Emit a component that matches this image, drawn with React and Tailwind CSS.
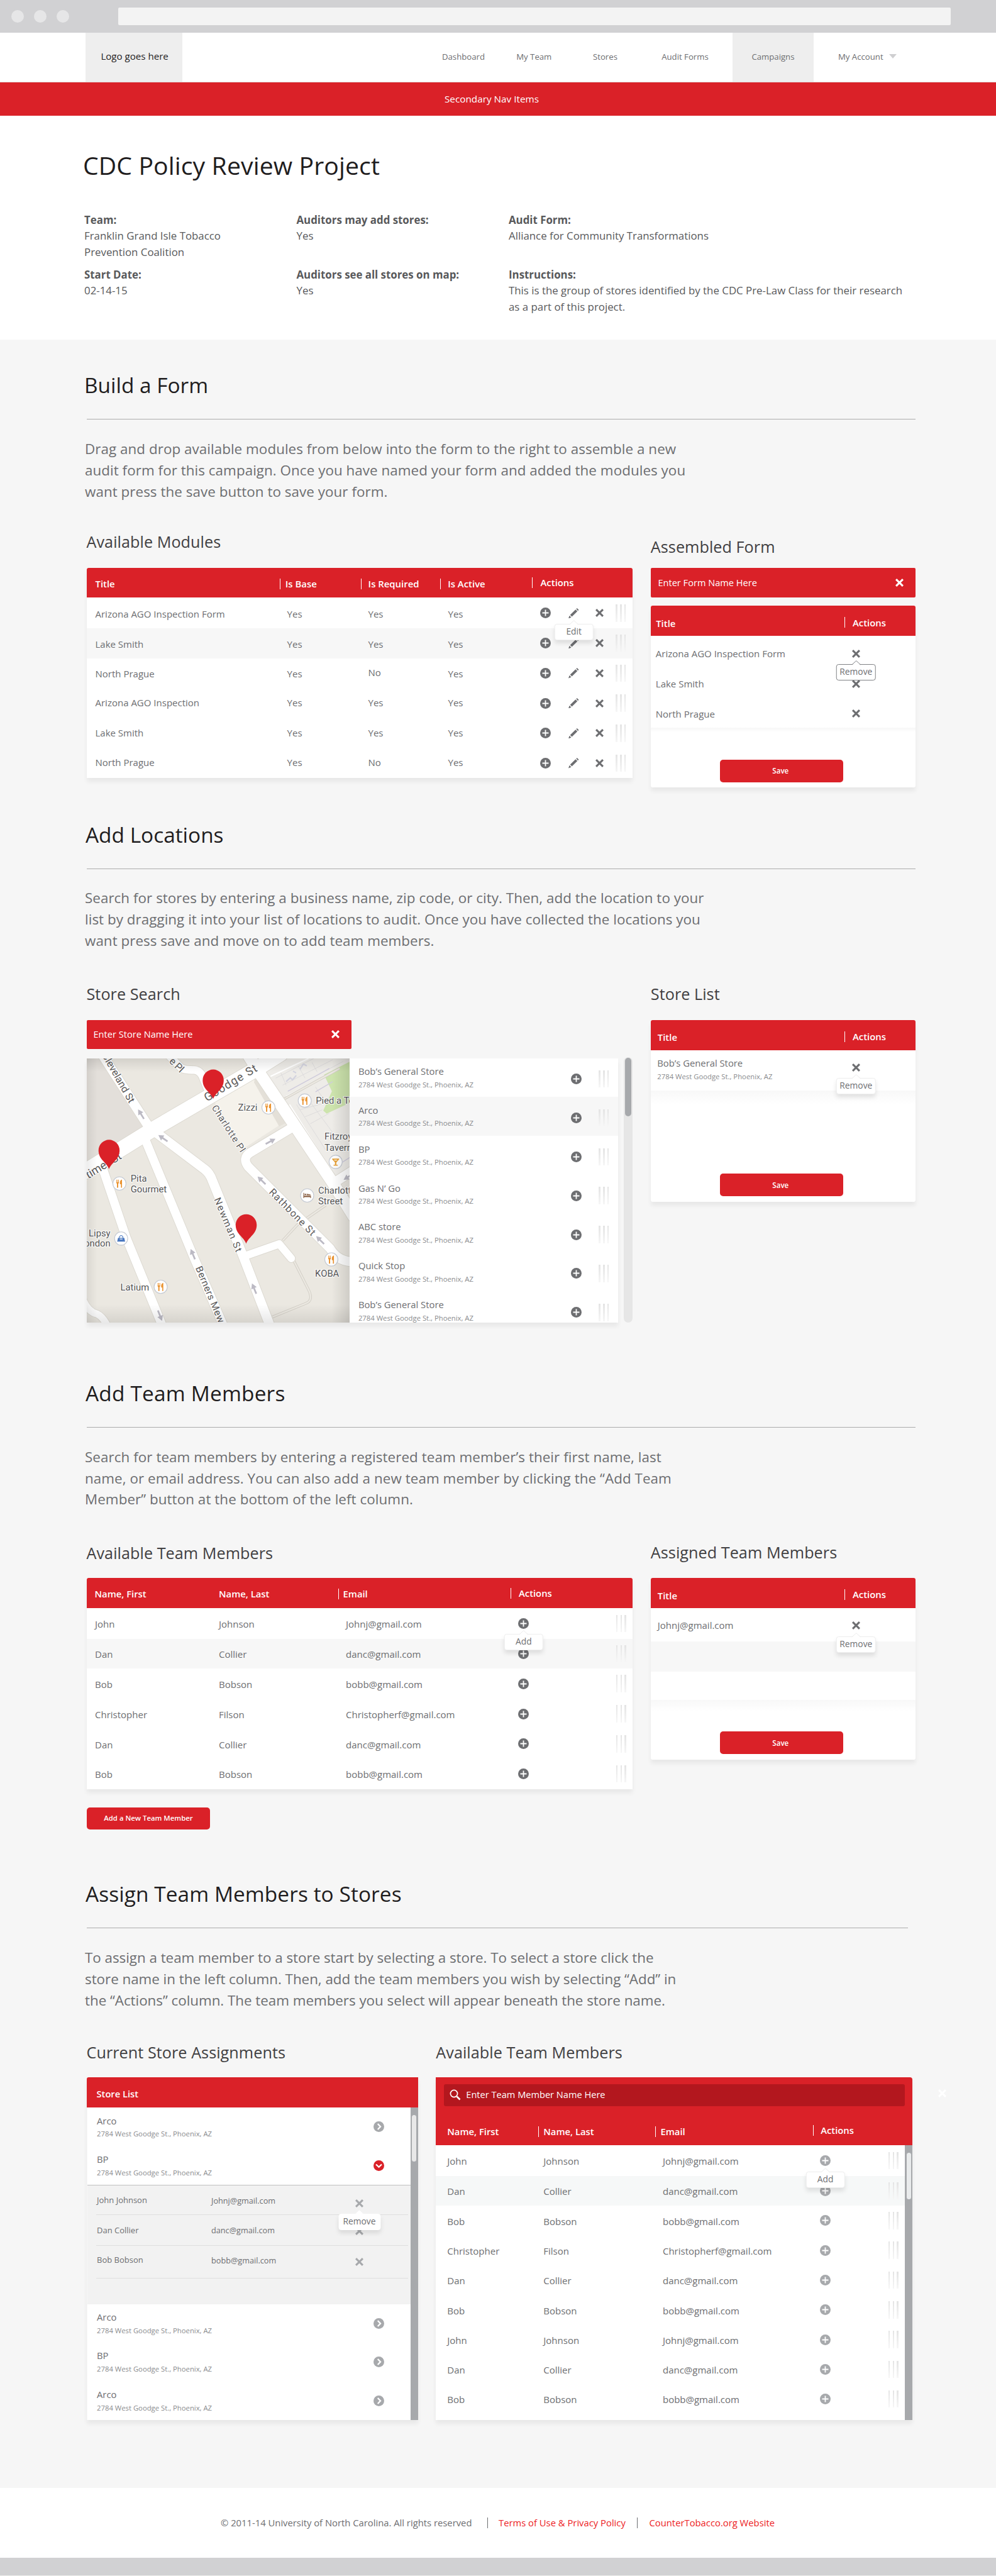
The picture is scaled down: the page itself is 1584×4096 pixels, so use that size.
import React from "react";

/* ---------- icons ---------- */

function PlusIcon({ className = "text-[#6d6e71]" }) {
  return (
    <svg viewBox="0 0 34 34" className={`block h-[17px] w-[17px] shrink-0 ${className}`}>
      <circle cx="17" cy="17" r="17" fill="currentColor" />
      <path d="M17 7v20M7 17h20" stroke="#fff" strokeWidth="3.6" />
    </svg>
  );
}

function CloseIcon({ className = "text-[#6d6e71]" }) {
  return (
    <svg viewBox="0 0 60 60" className={`block h-[13px] w-[13px] shrink-0 ${className}`}>
      <path d="M5 5L55 55M55 5L5 55" stroke="currentColor" strokeWidth="14" />
    </svg>
  );
}

function PencilIcon() {
  return (
    <svg viewBox="0 0 80 80" className="block h-[16.5px] w-[16.5px] shrink-0 text-[#6d6e71]">
      <path d="M60 6L66 0L80 13L73 20ZM55 11L69 24L27 65L13 52ZM8 57L22 71L0 80Z" fill="currentColor" />
    </svg>
  );
}

function ChevronIcon({ open }) {
  return (
    <svg viewBox="0 0 34 34" className={`block h-[17px] w-[17px] shrink-0 ${open ? "text-[#da2128]" : "text-[#a7a9ac]"}`}>
      <circle cx="17" cy="17" r="17" fill="currentColor" />
      <path d={open ? "M8 13L17 21.500L26 13" : "M13.500 8L22 17L13.500 26"} fill="none" stroke="#fff" strokeWidth="4.600" />
    </svg>
  );
}

function SearchIcon() {
  return (
    <svg viewBox="0 0 18 18" className="block h-[18px] w-[18px] shrink-0" fill="none" stroke="#fff">
      <circle cx="7" cy="7" r="5.600" strokeWidth="1.700" />
      <path d="M11.500 11.500L16.500 16.500" strokeWidth="2.600" />
    </svg>
  );
}

function Grip() {
  return (
    <div className="flex h-[27.5px] shrink-0 gap-[4.300px]">
      <div className="w-[2.500px] bg-linear-to-b from-[#e4e4e4] to-[#f6f6f6]" />
      <div className="w-[2.500px] bg-linear-to-b from-[#e4e4e4] to-[#f6f6f6]" />
      <div className="w-[2.500px] bg-linear-to-b from-[#e4e4e4] to-[#f6f6f6]" />
    </div>
  );
}

/* ---------- shared pieces ---------- */

function Tip({ label, outlined, wide, plain, children }) {
  const edge = outlined ? "border-[#808285]" : plain ? "border-white" : "border-[#eeeeee]";
  return (
    <div className="relative shrink-0">
      {children}
      <div
        className={`absolute top-1/2 left-1/2 z-10 mt-[17px] flex h-[26px] -translate-x-1/2 items-center justify-center rounded-[4px] border bg-white pb-[2px] text-[13.800px] leading-none text-[#6d6e71] ${edge} ${wide ? "w-[67px]" : "w-[62.500px]"} ${outlined ? "" : "shadow-[0_5px_7px_rgba(0,0,0,0.10)]"}`}
      >
        <svg viewBox="0 0 14 8" className="absolute -top-[7px] left-1/2 h-[8px] w-[14px] -translate-x-1/2">
          <path d="M0 8L7 1L14 8Z" fill="#fff" />
          <path d="M0 7L7 .7L14 7" fill="none" stroke={outlined ? "#808285" : plain ? "#fff" : "#ececec"} />
        </svg>
        {label}
      </div>
    </div>
  );
}

function HeadCell({ children, bar = true, className = "" }) {
  return (
    <div className={`flex h-full items-center ${className}`}>
      {bar && <div className="mr-[0.500px] h-[17px] w-px shrink-0 bg-white" />}
      <div className="whitespace-nowrap">{children}</div>
    </div>
  );
}

function SaveButton({ className = "" }) {
  return (
    <div className={`ml-[110px] flex h-[36px] w-[196px] items-center justify-center rounded-[5px] bg-[#da2128] pr-[3px] text-[11.600px] font-semibold text-white ${className}`}>
      Save
    </div>
  );
}

function Section({ title, lines, height, rule = "w-[1318.500px]", shift = "-ml-[1.500px]", track, children }) {
  return (
    <section className={`flex flex-col pl-[137.500px] ${height}`}>
      <h2 className={`h-[48px] text-[33.400px] leading-[48px] whitespace-nowrap text-[#1f1d1e] ${shift}`}>{title}</h2>
      <div className={`mt-[30px] h-px shrink-0 bg-[#acacac] ${rule}`} />
      <p className={`mt-[29.800px] -ml-[2.500px] text-[22.400px] leading-[33.800px] text-[#6d6e71] ${track}`}>
        {lines.map((l) => (
          <span key={l} className="block whitespace-nowrap">{l}</span>
        ))}
      </p>
      {children}
    </section>
  );
}

const h3 = "h-[32px] text-[25.200px] leading-[32px] tracking-[0.050px] whitespace-nowrap text-[#414042]";
const cardShadow = "shadow-[0_6px_7px_rgba(0,0,0,0.06)]";

function SideHeader({ pad }) {
  return (
    <div className={`flex h-[48px] rounded-t-[3px] bg-[#da2128] text-[14.900px] font-semibold text-white ${pad}`}>
      <HeadCell bar={false} className="w-[308.400px] pt-[8px] pl-[0.200px]">Title</HeadCell>
      <HeadCell className="gap-[11.300px] pt-[5px]">Actions</HeadCell>
    </div>
  );
}

function StoreText({ name }) {
  return (
    <div className="pt-[10.400px]">
      <div className="text-[14.800px] leading-[20px] whitespace-nowrap text-[#6d6e71]">{name}</div>
      <div className="mt-[3.600px] text-[11.300px] leading-[16px] whitespace-nowrap text-[#8a8b8e]">2784 West Goodge St., Phoenix, AZ</div>
    </div>
  );
}

/* ---------- page header ---------- */

function Header() {
  return (
    <>
      <div className="flex h-[52px] items-center bg-[#d1d1d3] pl-[18px]">
        <div className="flex gap-[16px]">
          <div className="h-[20px] w-[20px] rounded-full bg-[#e6e6e7]" />
          <div className="h-[20px] w-[20px] rounded-full bg-[#e6e6e7]" />
          <div className="h-[20px] w-[20px] rounded-full bg-[#e6e6e7]" />
        </div>
        <div className="ml-[78px] h-[28px] w-[1324px] rounded-[2px] bg-[#f3f3f3]" />
      </div>
      <div className="flex h-[78.600px] border-b border-[#e4d9d9] bg-white text-[13.200px] text-[#6d6e71]">
        <div className="ml-[136.400px] flex w-[153.600px] items-center bg-[#eeeeee] pb-[2px] pl-[24px] text-[15.100px] text-[#1f1d1e]">Logo goes here</div>
        <div className="ml-[391px] flex w-[112px] items-center justify-center">Dashboard</div>
        <div className="flex w-[112.600px] items-center justify-center">My Team</div>
        <div className="flex w-[113.800px] items-center justify-center">Stores</div>
        <div className="flex w-[140.200px] items-center justify-center">Audit Forms</div>
        <div className="ml-[5.400px] flex w-[129px] items-center justify-center bg-[#eeeeee]">Campaigns</div>
        <div className="ml-[39px] flex items-center gap-[9px]">
          My Account
          <svg viewBox="0 0 12 7" className="mb-[3px] h-[7px] w-[12px]"><path d="M0 0H12L6 7Z" fill="#cfcfd1" /></svg>
        </div>
      </div>
      <div className="flex h-[53.600px] items-center justify-center bg-[#da2128] pt-px pr-[20px] text-[15.300px] text-white">Secondary Nav Items</div>
      <div className="h-[356px] bg-white pt-[52.400px] pl-[134px]">
        <h1 className="h-[52px] text-[39.200px] leading-[52px] tracking-[0.100px] text-[#1f1d1e]">
          <span className="-ml-[2px]">CDC Policy Review Project</span>
        </h1>
        <div className="mt-[48.400px] grid grid-cols-[337.500px_337.500px_700px] gap-y-[10.500px] text-[16.850px] leading-[25.400px] whitespace-nowrap text-[#58595b]">
          <div><b>Team:</b><br />Franklin Grand Isle Tobacco<br />Prevention Coalition</div>
          <div><b>Auditors may add stores:</b><br />Yes</div>
          <div><b>Audit Form:</b><br />Alliance for Community Transformations</div>
          <div><b>Start Date:</b><br />02-14-15</div>
          <div><b>Auditors see all stores on map:</b><br />Yes</div>
          <div><b>Instructions:</b><br />This is the group of stores identified by the CDC Pre-Law Class for their research<br />as a part of this project.</div>
        </div>
      </div>
    </>
  );
}

/* ---------- build a form ---------- */

const MODULES = [
  ["Arizona AGO Inspection Form", "Yes", "h-[48.700px]", "pt-[2px]"],
  ["Lake Smith", "Yes", "h-[47.500px] bg-[#f7f7f7]", "pt-[2px]"],
  ["North Prague", "No", "h-[47.700px]", "pt-[2px]"],
  ["Arizona AGO Inspection", "Yes", "h-[47.700px]", "pb-[2px]"],
  ["Lake Smith", "Yes", "h-[47.700px]", "pb-[2px]"],
  ["North Prague", "No", "h-[47.700px]", "pb-[2px]"],
];

function BuildForm() {
  const cols = "grid grid-cols-[307.500px_128.500px_126.500px_146px_1fr]";
  return (
    <Section
      title="Build a Form"
      height="h-[714.400px]"
      shift="-ml-[3.500px]"
      track="tracking-[0.050px]"
      lines={[
        "Drag and drop available modules from below into the form to the right to assemble a new",
        "audit form for this campaign. Once you have named your form and added the modules you",
        "want press the save button to save your form.",
      ]}
    >
      <div className="flex gap-[28.500px]">
        <div className="w-[868.800px] pt-[47.100px]">
          <h3 className={h3}>Available Modules</h3>
          <div className={`mt-[25.200px] bg-white ${cardShadow}`}>
            <div className={`h-[47.800px] rounded-t-[3px] bg-[#da2128] text-[14.900px] font-semibold text-white ${cols}`}>
              <HeadCell bar={false} className="pt-[3px] pl-[14px]">Title</HeadCell>
              <HeadCell className="gap-[7.300px] pt-[3px]">Is Base</HeadCell>
              <HeadCell className="gap-[10.600px] pt-[3px]">Is Required</HeadCell>
              <HeadCell className="gap-[10.700px] pt-[3px]">Is Active</HeadCell>
              <HeadCell className="gap-[12px]">Actions</HeadCell>
            </div>
            {MODULES.map(([name, req, h, pad], i) => (
              <div key={i} className={`items-center text-[15px] text-[#6d6e71] ${cols} ${h}`}>
                <div className={`pl-[14px] ${pad}`}>{name}</div>
                <div className={`pl-[11.600px] ${pad}`}>Yes</div>
                <div className={req === "No" ? "pl-[12px] pb-[2px]" : `pl-[12px] ${pad}`}>{req}</div>
                <div className={`pl-[12.500px] ${pad}`}>Yes</div>
                <div className="flex items-center pl-[13px]">
                  <PlusIcon />
                  <div className="ml-[28.400px]">{i === 0 ? <Tip label="Edit"><PencilIcon /></Tip> : <PencilIcon />}</div>
                  <CloseIcon className="ml-[26.400px] text-[#6d6e71]" />
                  <div className="ml-[19px]"><Grip /></div>
                </div>
              </div>
            ))}
          </div>
        </div>
        <div className="w-[421.300px] pt-[54.700px]">
          <h3 className={h3}>Assembled Form</h3>
          <div className="mt-[18.100px] flex h-[47px] items-center justify-between rounded-[2px] bg-[#da2128] pr-[19px] pl-[11.600px] text-[14.600px] text-white">
            Enter Form Name Here
            <CloseIcon className="text-white" />
          </div>
          <div className={`mt-[13.300px] h-[288.600px] rounded-[3px] bg-white ${cardShadow}`}>
            <SideHeader pad="pl-[8.200px] [&>*:first-child]:w-[300.200px]" />
            <div className="pt-[4px] pl-[8px] text-[15px] text-[#6d6e71]">
              {["Arizona AGO Inspection Form", "Lake Smith", "North Prague"].map((n, i) => (
                <div key={n} className="flex h-[47.800px] items-center">
                  <div className="w-[312px]">{n}</div>
                  {i === 0 ? <Tip label="Remove" outlined><CloseIcon /></Tip> : <CloseIcon />}
                </div>
              ))}
            </div>
            <div className="-mt-[2px] h-[7px] bg-linear-to-b from-[#f7f7f7] to-white" />
            <SaveButton className="mt-[43.700px]" />
          </div>
        </div>
      </div>
    </Section>
  );
}

/* ---------- map ---------- */

const ROADS = [
  ["M-20 697L393 445L1000 97L1140 10", 86],
  ["M95 0L370 420", 54],
  ["M480 10L560 90Q575 104 640 104Q675 108 690 150L715 210", 44],
  ["M945 10L1025 135L1210 405L1440 745L1560 935", 68],
  ["M1440 750L1570 668", 54],
  ["M1210 428L965 572Q912 605 952 655L1425 1120Q1470 1195 1560 1195", 52],
  ["M420 462L700 670Q728 692 742 730L920 1160L1085 1580", 54],
  ["M350 490L640 1180L812 1570", 50],
  ["M100 640L245 1060L460 1575", 50],
  ["M925 1165L1130 1094L1200 1176", 44],
  ["M-10 1400Q20 1480 75 1492Q115 1510 145 1580", 40],
];

const FOOD = [[1068, 317], [1278, 278], [205, 750], [444, 1338], [1432, 1182]];
const ARROWS = [[330, 355, -122], [457, 492, -146], [1080, 510, -28], [1028, 732, -136], [1367, 1072, -136], [630, 1152, -113], [985, 1348, -113], [440, 1502, 68], [1530, 712, 148]];
const LABELS = [
  ["Zizzi", 892, 335], ["Pied a Terre", 1342, 295], ["Fitzroy", 1392, 501], ["Tavern", 1392, 565], ["Charlotte", 1356, 806], ["Street", 1356, 870],
  ["KOBA", 1338, 1282], ["Pita", 270, 738], ["Gourmet", 270, 800], ["Latium", 211, 1360],
];
const STREETS = [
  ["Goodge St", 712, 285, -31, 66, 345], ["Charlotte Pl", 738, 318, 57, 54, 308], ["Rathbone St", 1068, 802, 45, 58, 352],
  ["Newman St", 752, 840, 67, 56, 330], ["Berners Mews", 645, 1230, 67, 56, 375], ["e Pl", 490, 58, 44, 58, 92],
];

function Map() {
  return (
    <svg viewBox="16 38 1525 1505" preserveAspectRatio="none" className="block h-full w-[418.900px] shrink-0" fontFamily="Roboto, sans-serif">
      <defs>
        <linearGradient id="edgeX"><stop offset="0" stopColor="#000" stopOpacity=".07" /><stop offset=".04" stopColor="#000" stopOpacity="0" /><stop offset=".93" stopColor="#000" stopOpacity="0" /><stop offset="1" stopColor="#000" stopOpacity=".12" /></linearGradient>
        <linearGradient id="edgeY" x2="0" y2="1"><stop offset="0" stopColor="#000" stopOpacity=".1" /><stop offset=".05" stopColor="#000" stopOpacity="0" /><stop offset=".93" stopColor="#000" stopOpacity="0" /><stop offset="1" stopColor="#000" stopOpacity=".09" /></linearGradient>
      </defs>
      <rect x="16" y="38" width="1525" height="1505" fill="#ebe8e1" />
      <path d="M16 38H95L370 440L16 650Z" fill="#e3dfda" />
      <path d="M745 270L990 135L1160 400L925 550Z" fill="#f5f2eb" />
      <path d="M990 135L1180 400L1130 425L985 175Z" fill="#e4e0d8" />
      <path d="M1030 38H1541V650L1440 735L1245 420L1030 105Z" fill="#eeece8" />
      <g fill="none" stroke="#dad8da" strokeWidth="3">
        <path d="M1110 150L1330 38M1150 190L1440 45M1180 225L1500 55M1160 270L1541 60M1250 330L1400 290M1280 370L1380 330M1310 410L1420 350M1230 300L1400 560M1290 260L1470 500M1340 200L1420 320M1140 120L1170 190M1240 80L1280 150M1320 60L1350 115M1400 150L1440 220" />
      </g>
      <g fill="none" stroke="#fff" strokeWidth="7"><path d="M1080 140L1300 38M1170 255L1541 65M1190 300L1440 690" /></g>
      <path d="M1170 170l25 -22l12 12l22 -25M1250 100l20 -30l20 10M1210 110l18 10" stroke="#d3d3df" strokeWidth="8" fill="none" />
      <path d="M1390 130L1541 55V290L1405 352L1385 335L1435 225Z" fill="#cde4ad" />
      <path d="M1180 225L1420 95M1340 228L1440 170M1470 645L1541 600" stroke="#cfcbdc" strokeWidth="5" fill="none" />
      <path d="M1150 1075L1235 985L1400 873M1215 1190L1300 1355Q1330 1415 1285 1432L1085 1512M1160 268L1480 95" fill="none" stroke="#cfcbc3" strokeWidth="15" />
      <path d="M1150 1075L1235 985L1400 873M1215 1190L1300 1355Q1330 1415 1285 1432L1085 1512M1160 268L1480 95" fill="none" stroke="#ebe8e1" strokeWidth="9" />
      <g fill="none" stroke="#dcd9d1" strokeLinecap="round" strokeLinejoin="round">
        {ROADS.map(([d, w]) => <path key={d} d={d} strokeWidth={w + 7} />)}
      </g>
      <g fill="none" stroke="#fff" strokeLinecap="round" strokeLinejoin="round">
        {ROADS.map(([d, w]) => <path key={d} d={d} strokeWidth={w} />)}
      </g>
      {ARROWS.map(([x, y, a]) => (
        <path key={`${x}-${y}`} transform={`translate(${x} ${y}) rotate(${a})`} d="M-32 -5H2V-17L32 0L2 17V5H-32Z" fill="#bcbac4" />
      ))}
      <g fill="#5c5a5a" stroke="#fff" strokeWidth="8" strokeLinejoin="round" paintOrder="stroke">
        {STREETS.map(([t, x, y, a, s, l]) => (
          <text key={t} transform={`translate(${x} ${y}) rotate(${a})`} fontSize={s} textLength={l} fontWeight="400">{t}</text>
        ))}
        <text transform="translate(262 296) rotate(60)" fontSize="58" textAnchor="end">Cleveland St</text>
        <text transform="translate(222 606) rotate(-31)" fontSize="66" textAnchor="end">Mortimer St</text>
        <g fill="#545454" fontSize="54">
          {LABELS.map(([t, x, y]) => <text key={t} x={x} y={y}>{t}</text>)}
          <text x="153" y="1050" textAnchor="end">Lipsy</text>
          <text x="153" y="1108" textAnchor="end">London</text>
        </g>
      </g>
      <g fill="#fff" stroke="#c3c8d2" strokeWidth="4">
        {[...FOOD, [215, 1063], [1457, 627], [1292, 818]].map(([x, y]) => <circle key={`${x}-${y}`} cx={x} cy={y} r="38" />)}
      </g>
      {FOOD.map(([x, y]) => (
        <g key={`${x}-${y}`} transform={`translate(${x} ${y})`} fill="#ea9330">
          <path d="M-18 -22H-15V-8H-12V-22H-9V-8H-6V-22H-3V-4L-7 2V24H-14V2L-18 -4Z" />
          <path d="M15 -23V24H9V4H3V-10Q5 -20 15 -23Z" />
        </g>
      ))}
      <g transform="translate(215 1063)"><path d="M-18 -4H18L23 18H-23Z" fill="#4a78c0" /><path d="M-10 -4V-10Q0 -24 10 -10V-4" fill="none" stroke="#4a78c0" strokeWidth="4" /><path d="M-8 3H8" stroke="#fff" strokeWidth="4" /></g>
      <path transform="translate(1457 627)" d="M-20 -19H20V-14L4 3V16H12V21H-12V16H-4V3L-20 -14ZM-10 -13L-6 -8H6L10 -13Z" fill="#e8a23a" fillRule="evenodd" />
      <path transform="translate(1292 818)" d="M-22 -15H-18V1H22V15H18V9H-18V15H-22ZM-15 -9H-5V-2H-15ZM-2 -9L18 -6Q22 -4 22 -1H-2Z" fill="#8b6246" />
      <rect x="16" y="38" width="1525" height="1505" fill="url(#edgeX)" />
      <rect x="16" y="38" width="1525" height="1505" fill="url(#edgeY)" />
      {[[748, 162], [145, 562], [939, 986]].map(([x, y]) => (
        <path key={x} transform={`translate(${x} ${y})`} d="M0 106C-14 68 -61 52 -61 0A61 61 0 0 1 61 0C61 52 14 68 0 106Z" fill="#da2128" />
      ))}
    </svg>
  );
}

/* ---------- add locations ---------- */

function AddLocations() {
  const stores = ["Bob’s General Store", "Arco", "BP", "Gas N’ Go", "ABC store", "Quick Stop", "Bob’s General Store"];
  return (
    <Section
      title="Add Locations"
      height="h-[888.500px]"
      track="tracking-[0.040px]"
      lines={[
        "Search for stores by entering a business name, zip code, or city. Then, add the location to your",
        "list by dragging it into your list of locations to audit. Once you have collected the locations you",
        "want press save and move on to add team members.",
      ]}
    >
      <div className="flex gap-[28.500px]">
        <div className="w-[868.800px] pt-[51.700px]">
          <h3 className={h3}>Store Search</h3>
          <div className="mt-[25.300px] ml-[0.500px] flex h-[46.400px] w-[420.500px] items-center justify-between rounded-[2px] bg-[#da2128] pr-[18.500px] pl-[10.500px] text-[14.600px] text-white">
            Enter Store Name Here
            <CloseIcon className="text-white" />
          </div>
          <div className="mt-[14.400px] flex h-[420.400px] justify-between">
            <div className={`flex w-[845.300px] overflow-hidden bg-white ${cardShadow}`}>
              <Map />
              <div className="flex-1">
                {stores.map((s, i) => (
                  <div key={i} className={i === 1 ? "flex h-[61.900px] bg-[#f7f7f7] pl-[13.500px]" : "flex h-[61.900px] pl-[13.500px]"}>
                    <div className="w-[338.500px]"><StoreText name={s} /></div>
                    <div className="flex items-center pt-[4px]">
                      <PlusIcon />
                      <div className="ml-[27px]"><Grip /></div>
                    </div>
                  </div>
                ))}
              </div>
            </div>
            <div className="-mt-[2px] w-[14.300px] rounded-full bg-[#e6e6e6] px-[2px] pt-[1.500px]">
              <div className="h-[93px] rounded-full bg-[#a7a9ac]" />
            </div>
          </div>
        </div>
        <div className="w-[421.300px] pt-[51.700px]">
          <h3 className={h3}>Store List</h3>
          <div className={`mt-[25.200px] h-[289px] rounded-[3px] bg-white ${cardShadow}`}>
            <SideHeader pad="pl-[10.800px] [&>*:first-child]:w-[297.600px]" />
            <div className="flex h-[64.400px] pl-[10.500px]">
              <div className="w-[309.500px]"><StoreText name="Bob’s General Store" /></div>
              <div className="pt-[21px]"><Tip label="Remove"><CloseIcon /></Tip></div>
            </div>
            <div className="h-[22px] bg-linear-to-b from-[#f8f8f8] to-white" />
            <SaveButton className="mt-[110.300px]" />
          </div>
        </div>
      </div>
    </Section>
  );
}

/* ---------- add team members ---------- */

const PEOPLE = [
  ["John", "Johnson", "Johnj@gmail.com"],
  ["Dan", "Collier", "danc@gmail.com"],
  ["Bob", "Bobson", "bobb@gmail.com"],
  ["Christopher", "Filson", "Christopherf@gmail.com"],
  ["Dan", "Collier", "danc@gmail.com"],
  ["Bob", "Bobson", "bobb@gmail.com"],
  ["John", "Johnson", "Johnj@gmail.com"],
  ["Dan", "Collier", "danc@gmail.com"],
  ["Bob", "Bobson", "bobb@gmail.com"],
];

function AddTeamMembers() {
  const cols = "grid grid-cols-[210.500px_190px_273.500px_1fr]";
  return (
    <Section
      title="Add Team Members"
      height="h-[796.200px]"
      shift="-ml-[1.500px] tracking-[0.200px]"
      track="tracking-[0.065px]"
      lines={[
        "Search for team members by entering a registered team member’s their first name, last",
        "name, or email address. You can also add a new team member by clicking the “Add Team",
        "Member” button at the bottom of the left column.",
      ]}
    >
      <div className="flex gap-[28.500px]">
        <div className="w-[868.800px] pt-[51.800px]">
          <h3 className={h3}>Available Team Members</h3>
          <div className={`mt-[23.900px] bg-white ${cardShadow}`}>
            <div className={`h-[48.100px] rounded-t-[3px] bg-[#da2128] text-[14.800px] font-semibold text-white ${cols}`}>
              <HeadCell bar={false} className="pt-[3px] pl-[13px]">Name, First</HeadCell>
              <HeadCell bar={false} className="pt-[3px]">Name, Last</HeadCell>
              <HeadCell className="gap-[6px] pt-[3px]">Email</HeadCell>
              <HeadCell className="gap-[12px]">Actions</HeadCell>
            </div>
            {PEOPLE.slice(0, 6).map(([f, l, e], i) => (
              <div
                key={i}
                className={`items-center text-[15px] text-[#6d6e71] ${cols} ${i === 0 ? "h-[48.700px]" : i === 1 ? "h-[47.600px] bg-[#f7f7f7]" : "h-[47.800px]"}`}
              >
                <div className="pt-[2px] pl-[13.500px]">{f}</div>
                <div className="pt-[2px]">{l}</div>
                <div className="pt-[2px] pl-[12px]">{e}</div>
                <div className="flex items-center justify-between pr-[10.500px] pl-[12.800px]">
                  {i === 0 ? <Tip label="Add"><PlusIcon /></Tip> : <PlusIcon />}
                  <Grip />
                </div>
              </div>
            ))}
          </div>
          <div className="mt-[29px] ml-[0.700px] flex h-[35.400px] w-[195.600px] items-center justify-center rounded-[5px] bg-[#da2128] pb-px text-[11.350px] font-semibold text-white">
            Add a New Team Member
          </div>
        </div>
        <div className="w-[421.300px] pt-[51.100px]">
          <h3 className={h3}>Assigned Team Members</h3>
          <div className={`mt-[24.800px] h-[289px] rounded-[3px] bg-white ${cardShadow}`}>
            <SideHeader pad="pl-[10.800px] [&>*:first-child]:w-[297.600px]" />
            <div className="flex h-[52.600px] items-center pt-[2.500px] pl-[11px] text-[15px] text-[#6d6e71]">
              <div className="w-[309px]">Johnj@gmail.com</div>
              <Tip label="Remove"><CloseIcon /></Tip>
            </div>
            <div className="h-[47.800px] bg-[#f7f7f7]" />
            <div className="mt-[45.400px] h-[18px] bg-linear-to-b from-[#f8f8f8] to-white" />
            <SaveButton className="mt-[32.500px]" />
          </div>
        </div>
      </div>
    </Section>
  );
}

/* ---------- assign team members ---------- */

function StoreRow({ name, open }) {
  return (
    <div className="flex h-[61.500px] items-center justify-between bg-white pr-[41.700px] pl-[15.500px]">
      <div className="h-full"><StoreText name={name} /></div>
      <ChevronIcon open={open} />
    </div>
  );
}

function AssignMembers() {
  const cols = "grid grid-cols-[163px_186.200px_250.200px_1fr]";
  const assigned = [
    ["John Johnson", "Johnj@gmail.com", "h-[46.900px]", "pt-[2px]", "pt-[10px]"],
    ["Dan Collier", "danc@gmail.com", "h-[48.600px]", "pt-[1px]", "pt-[4px]"],
    ["Bob Bobson", "bobb@gmail.com", "h-[52px]", "pb-[4px]", ""],
  ];
  return (
    <Section
      title="Assign Team Members to Stores"
      height="h-[968.300px]"
      rule="w-[1306px]"
      shift="-ml-[1.500px] tracking-[0.080px]"
      track="tracking-[-0.030px]"
      lines={[
        "To assign a team member to a store start by selecting a store. To select a store click the",
        "store name in the left column. Then, add the team members you wish by selecting “Add” in",
        "the “Actions” column. The team members you select will appear beneath the store name.",
      ]}
    >
      <div className="flex gap-[28.700px]">
        <div className="w-[527.100px] pt-[49.300px]">
          <h3 className={h3}>Current Store Assignments</h3>
          <div className={`mt-[24.400px] rounded-t-[3px] ${cardShadow}`}>
            <div className="flex h-[48.100px] items-center rounded-tl-[3px] bg-[#da2128] pt-[3.500px] pl-[16px] text-[14.700px] font-semibold text-white">Store List</div>
            <div className="flex pl-[1px]">
              <div className="flex-1 bg-white">
                <StoreRow name="Arco" />
                <StoreRow name="BP" open />
                <div className="h-[189.300px] border-t border-[#bfbfbf] bg-[#f2f2f2] pr-[4.500px] pl-[14.500px] text-[13px] text-[#6d6e71]">
                  {assigned.map(([n, e, h, pad, xpad], i) => (
                    <div key={n} className={`flex items-center border-b border-[#dfdfdf] ${h}`}>
                      <div className={`w-[183px] pl-px ${pad}`}>{n}</div>
                      <div className={`w-[229px] text-[12.700px] ${pad}`}>{e}</div>
                      <div className={xpad}>
                        {i === 0 ? <Tip label="Remove" wide plain><CloseIcon className="text-[#a7a9ac]" /></Tip> : <CloseIcon className="text-[#a7a9ac]" />}
                      </div>
                    </div>
                  ))}
                </div>
                <StoreRow name="Arco" />
                <StoreRow name="BP" />
                <StoreRow name="Arco" />
              </div>
              <div className="w-[11.600px] bg-[#a7a9ac] px-[2.300px] pt-[12px]">
                <div className="h-[74px] rounded-full bg-[#e8e8e8]" />
              </div>
            </div>
          </div>
        </div>
        <div className="w-[757.500px] pt-[49.300px]">
          <h3 className={h3}>Available Team Members</h3>
          <div className={`relative mt-[24.400px] ${cardShadow}`}>
            <div className="absolute top-[18.500px] left-[799px]"><CloseIcon className="text-white" /></div>
            <div className="h-[108.300px] rounded-tr-[4px] bg-[#da2128] pt-[10.500px] text-white">
              <div className="mr-[11.400px] ml-[13px] flex h-[35.600px] items-center gap-[8px] rounded-[3px] bg-[#b3171e] pl-[9px] text-[14.600px]">
                <SearchIcon />
                Enter Team Member Name Here
              </div>
              <div className={`h-[62.200px] text-[14.800px] font-semibold ${cols}`}>
                <HeadCell bar={false} className="pt-[17.400px] pl-[18px]">Name, First</HeadCell>
                <HeadCell className="gap-[6.500px] pt-[17.400px]">Name, Last</HeadCell>
                <HeadCell className="gap-[6.500px] pt-[17.400px]">Email</HeadCell>
                <HeadCell className="gap-[11px] pt-[14.200px]">Actions</HeadCell>
              </div>
            </div>
            <div className="flex h-[436.800px] bg-white">
              <div className="flex-1">
                {PEOPLE.map(([f, l, e], i) => (
                  <div
                    key={i}
                    className={`items-center text-[15px] text-[#6d6e71] ${cols} ${i === 0 ? "h-[48.500px]" : i === 1 ? "h-[47.300px] bg-[#f6f8f8]" : "h-[47.300px]"}`}
                  >
                    <div className="pt-[2px] pl-[18px]">{f}</div>
                    <div className="pt-[2px] pl-[8px]">{l}</div>
                    <div className="pt-[2px] pl-[11.500px]">{e}</div>
                    <div className="flex items-center justify-between pr-[10.500px] pl-[11.500px]">
                      {i === 0 ? <Tip label="Add"><PlusIcon className="text-[#a7a9ac]" /></Tip> : <PlusIcon className="text-[#a7a9ac]" />}
                      <Grip />
                    </div>
                  </div>
                ))}
              </div>
              <div className="w-[11.400px] bg-[#a7a9ac] px-[2.200px] pt-[12px]">
                <div className="h-[74px] rounded-full bg-[#e9ebec]" />
              </div>
            </div>
          </div>
        </div>
      </div>
    </Section>
  );
}

function Footer() {
  return (
    <>
      <div className="flex h-[111.800px] items-center bg-white pl-[351px] text-[14.800px] whitespace-nowrap text-[#6d6e71]">
        <span className="w-[423.500px]">© 2011-14 University of North Carolina. All rights reserved</span>
        <div className="h-[17px] w-px bg-[#6d6e71]" />
        <span className="ml-[17.500px] w-[220px] text-[#ed1c24]">Terms of Use &amp; Privacy Policy</span>
        <div className="h-[17px] w-px bg-[#6d6e71]" />
        <span className="ml-[18.500px] text-[#ed1c24]">CounterTobacco.org Website</span>
      </div>
      <div className="h-[27.600px] bg-[#d1d1d3]" />
      <div className="h-[1px] bg-[#ececec]" />
    </>
  );
}

export default function App() {
  return (
    <div className="h-[4096px] w-[1584px] overflow-hidden bg-[#f6f6f6] font-['Open_Sans','Noto_Sans',sans-serif]">
      <Header />
      <main className="pt-[48px]">
        <BuildForm />
        <AddLocations />
        <AddTeamMembers />
        <AssignMembers />
      </main>
      <Footer />
    </div>
  );
}
